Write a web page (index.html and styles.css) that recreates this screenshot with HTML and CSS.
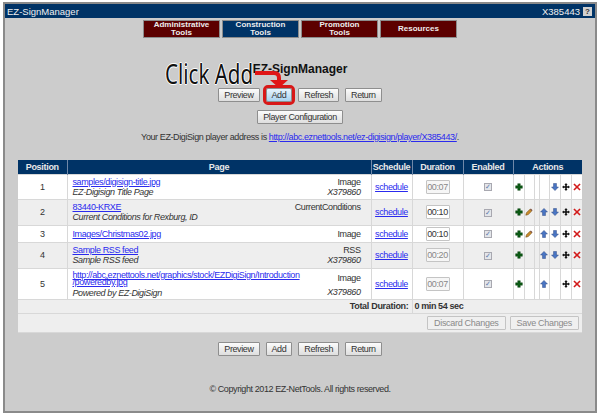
FILE: index.html
```html
<!DOCTYPE html>
<html lang="en">
<head>
    <meta charset="UTF-8">
    <title>EZ-SignManager</title>
    <link rel="stylesheet" href="styles.css">
</head>
<body>
    <svg class="icon-defs" width="0" height="0">
        <defs>
            <symbol id="i-add" viewBox="0 0 10 10">
                <path d="M3.400 .8h3.200v2.600h2.600v3.200H6.600v2.600H3.400V6.600H.8V3.400h2.600z" fill="#0b5a14" stroke="#063a0b" stroke-width=".5"/>
            </symbol>
            <symbol id="i-edit" viewBox="0 0 10 10">
                <path d="M1 9l.8-3 4.500-4.500 2.200 2.200L4 8.200z" fill="#c98a2a" stroke="#6b4a12" stroke-width=".7"/>
                <path d="M6.300 1.500l1-1 2.200 2.200-1 1z" fill="#7a4a3a"/>
            </symbol>
            <symbol id="i-up" viewBox="0 0 10 10">
                <path d="M5 .5l4.300 4.500H6.800v4.500H3.200V5H.7z" fill="#4a76c4" stroke="#24407c" stroke-width=".6"/>
            </symbol>
            <symbol id="i-down" viewBox="0 0 10 10">
                <path d="M5 9.500L.7 5h2.500V.5h3.600V5h2.500z" fill="#4a76c4" stroke="#24407c" stroke-width=".6"/>
            </symbol>
            <symbol id="i-move" viewBox="0 0 10 10">
                <path d="M5 0l2 2.400H6V4h1.600V3l2.400 2-2.400 2V6H6v1.600h1L5 10 3 7.600h1V6H2.400v1L0 5l2.400-2v1H4V2.400H3z" fill="#111"/>
            </symbol>
            <symbol id="i-del" viewBox="0 0 10 10">
                <path d="M1.200 1.200l7.600 7.600M8.800 1.200L1.200 8.800" stroke="#d21a1a" stroke-width="2" fill="none"/>
            </symbol>
        </defs>
    </svg>

    <div class="window">
        <header class="titlebar">
            <span class="app-name">EZ-SignManager</span>
            <span class="account">X385443</span>
            <span class="help-btn">?</span>
        </header>

        <nav class="tabs">
            <a href="#" class="tab">Administrative<br>Tools</a>
            <a href="#" class="tab tab-active">Construction<br>Tools</a>
            <a href="#" class="tab">Promotion<br>Tools</a>
            <a href="#" class="tab">Resources</a>
        </nav>

        <main class="main-content">
            <h1>EZ-SignManager</h1>

            <div class="callout">
                <span class="callout-text">Click Add</span>
                <svg class="callout-arrow" width="34" height="20" viewBox="0 0 34 20">
                    <path d="M0 3h19q5 0 5 5v4" fill="none" stroke="#e01616" stroke-width="4"/>
                    <path d="M15 10h18l-9 8z" fill="#e01616"/>
                </svg>
            </div>

            <div class="btn-row">
                <button type="button">Preview</button>
                <button type="button" class="btn-hot">Add</button>
                <button type="button">Refresh</button>
                <button type="button">Return</button>
            </div>
            <div class="btn-row btn-row-config">
                <button type="button">Player Configuration</button>
            </div>

            <p class="address">Your EZ-DigiSign player address is <a href="#">http://abc.eznettools.net/ez-digisign/player/X385443/</a>.</p>

            <table class="pages">
                <colgroup>
                    <col class="c-pos"><col class="c-page"><col class="c-sched"><col class="c-dur"><col class="c-en">
                    <col class="c-a1"><col class="c-a2"><col class="c-a3"><col class="c-a4"><col class="c-a5"><col class="c-a6"><col class="c-a7">
                </colgroup>
                <thead>
                    <tr>
                        <th>Position</th><th>Page</th><th>Schedule</th><th>Duration</th><th>Enabled</th>
                        <th colspan="7">Actions</th>
                    </tr>
                </thead>
                <tbody>
                    <tr class="row-1">
                        <td class="pos">1</td>
                        <td class="page-cell">
                            <div class="page-info">
                                <div><a href="#">samples/digisign-title.jpg</a><em>EZ-Digisign Title Page</em></div>
                                <div class="page-type">Image<em>X379860</em></div>
                            </div>
                        </td>
                        <td class="center"><a href="#" class="sched">schedule</a></td>
                        <td class="center"><input class="dur" value="00:07" disabled></td>
                        <td class="center"><input type="checkbox" class="chk" checked disabled></td>
                        <td class="act"><svg class="ico"><use href="#i-add"/></svg></td>
                        <td class="act"></td><td class="act"></td><td class="act"></td>
                        <td class="act"><svg class="ico"><use href="#i-down"/></svg></td>
                        <td class="act"><svg class="ico"><use href="#i-move"/></svg></td>
                        <td class="act"><svg class="ico"><use href="#i-del"/></svg></td>
                    </tr>
                    <tr class="alt row-2">
                        <td class="pos">2</td>
                        <td class="page-cell">
                            <div class="page-info">
                                <div><a href="#">83440-KRXE</a><em>Current Conditions for Rexburg, ID</em></div>
                                <div class="page-type page-type-top">CurrentConditions</div>
                            </div>
                        </td>
                        <td class="center"><a href="#" class="sched">schedule</a></td>
                        <td class="center"><input class="dur" value="00:10"></td>
                        <td class="center"><input type="checkbox" class="chk" checked disabled></td>
                        <td class="act"><svg class="ico"><use href="#i-add"/></svg></td>
                        <td class="act"><svg class="ico"><use href="#i-edit"/></svg></td>
                        <td class="act"></td>
                        <td class="act"><svg class="ico"><use href="#i-up"/></svg></td>
                        <td class="act"><svg class="ico"><use href="#i-down"/></svg></td>
                        <td class="act"><svg class="ico"><use href="#i-move"/></svg></td>
                        <td class="act"><svg class="ico"><use href="#i-del"/></svg></td>
                    </tr>
                    <tr class="row-3">
                        <td class="pos">3</td>
                        <td class="page-cell">
                            <div class="page-info">
                                <div><a href="#">Images/Christmas02.jpg</a></div>
                                <div class="page-type">Image</div>
                            </div>
                        </td>
                        <td class="center"><a href="#" class="sched">schedule</a></td>
                        <td class="center"><input class="dur" value="00:10"></td>
                        <td class="center"><input type="checkbox" class="chk" checked disabled></td>
                        <td class="act"><svg class="ico"><use href="#i-add"/></svg></td>
                        <td class="act"><svg class="ico"><use href="#i-edit"/></svg></td>
                        <td class="act"></td>
                        <td class="act"><svg class="ico"><use href="#i-up"/></svg></td>
                        <td class="act"><svg class="ico"><use href="#i-down"/></svg></td>
                        <td class="act"><svg class="ico"><use href="#i-move"/></svg></td>
                        <td class="act"><svg class="ico"><use href="#i-del"/></svg></td>
                    </tr>
                    <tr class="alt row-4">
                        <td class="pos">4</td>
                        <td class="page-cell">
                            <div class="page-info">
                                <div><a href="#">Sample RSS feed</a><em>Sample RSS feed</em></div>
                                <div class="page-type">RSS<em>X379860</em></div>
                            </div>
                        </td>
                        <td class="center"><a href="#" class="sched">schedule</a></td>
                        <td class="center"><input class="dur" value="00:20" disabled></td>
                        <td class="center"><input type="checkbox" class="chk" checked disabled></td>
                        <td class="act"><svg class="ico"><use href="#i-add"/></svg></td>
                        <td class="act"></td><td class="act"></td>
                        <td class="act"><svg class="ico"><use href="#i-up"/></svg></td>
                        <td class="act"><svg class="ico"><use href="#i-down"/></svg></td>
                        <td class="act"><svg class="ico"><use href="#i-move"/></svg></td>
                        <td class="act"><svg class="ico"><use href="#i-del"/></svg></td>
                    </tr>
                    <tr class="row-5">
                        <td class="pos">5</td>
                        <td class="page-cell">
                            <div class="page-info">
                                <div class="page-long"><a href="#">http://abc.eznettools.net/graphics/stock/EZDigiSign/Introduction<wbr>/poweredby.jpg</a><em>Powered by EZ-DigiSign</em></div>
                                <div class="page-type">Image<em class="gap-top">X379860</em></div>
                            </div>
                        </td>
                        <td class="center"><a href="#" class="sched">schedule</a></td>
                        <td class="center"><input class="dur" value="00:07" disabled></td>
                        <td class="center"><input type="checkbox" class="chk" checked disabled></td>
                        <td class="act"><svg class="ico"><use href="#i-add"/></svg></td>
                        <td class="act"></td><td class="act"></td>
                        <td class="act"><svg class="ico"><use href="#i-up"/></svg></td>
                        <td class="act"></td>
                        <td class="act"><svg class="ico"><use href="#i-move"/></svg></td>
                        <td class="act"><svg class="ico"><use href="#i-del"/></svg></td>
                    </tr>
                </tbody>
                <tfoot>
                    <tr class="alt total-row">
                        <td colspan="3" class="total-label">Total Duration:</td>
                        <td colspan="9" class="total-value">0 min 54 sec</td>
                    </tr>
                    <tr class="alt save-row">
                        <td colspan="12">
                            <div class="save-btns">
                                <button type="button" disabled>Discard Changes</button>
                                <button type="button" disabled>Save Changes</button>
                            </div>
                        </td>
                    </tr>
                </tfoot>
            </table>

            <div class="btn-row btn-row-bottom">
                <button type="button">Preview</button>
                <button type="button">Add</button>
                <button type="button">Refresh</button>
                <button type="button">Return</button>
            </div>

            <p class="copyright">© Copyright 2012 EZ-NetTools. All rights reserved.</p>
        </main>
    </div>
</body>
</html>
```
FILE: styles.css
```css
:root {
    --navy: #003366;
    --maroon: #5c0000;
    --panel: #cccccc;
    --row-alt: #eeeeee;
    --line: #d8d8d8;
    --link: #2a2aee;
    --text: #333333;
}

* {
    margin: 0;
    padding: 0;
    box-sizing: border-box;
}

html, body {
    height: 415px;
    overflow: hidden;
}

body {
    font-family: "Liberation Sans", Arial, sans-serif;
    font-size: 9px;
    letter-spacing: -.4px;
    color: var(--text);
    background: #ffffff;
    padding: 2px 3px;
}

.icon-defs {
    position: absolute;
}

.window {
    height: 411px;
    background: var(--panel);
    border: 2px solid #8a8a8a;
}

.titlebar {
    height: 14px;
    background: var(--navy);
    color: #f0f0f0;
    display: flex;
    align-items: center;
    padding: 0 3px 0 2px;
    font-size: 9.500px;
    letter-spacing: 0;
}

.app-name {
    flex: 1;
}

.account {
    margin-right: 3px;
}

.help-btn {
    width: 9px;
    height: 9px;
    background: #d0d0d0;
    color: #333333;
    font-size: 8px;
    font-weight: bold;
    line-height: 9px;
    text-align: center;
}

.tabs {
    display: flex;
    justify-content: center;
    gap: 2px;
    padding: 2px 0 0;
}

.tab {
    width: 77px;
    height: 18px;
    background: var(--maroon);
    border: 1px solid #8c8c8c;
    color: #eeeeee;
    font-size: 8px;
    font-weight: bold;
    letter-spacing: 0;
    line-height: 8px;
    text-align: center;
    text-decoration: none;
    display: flex;
    align-items: center;
    justify-content: center;
}

.tab-active {
    background: var(--navy);
}

.main-content {
    position: relative;
    padding: 24px 13px 0;
}

h1 {
    font-size: 12px;
    letter-spacing: 0;
    line-height: 14px;
    color: #111111;
    text-align: center;
}

.callout {
    position: absolute;
    left: 0;
    top: 0;
}

.callout-text {
    position: absolute;
    left: 160px;
    top: 22px;
    font-family: "Noto Sans", sans-serif;
    font-size: 27px;
    letter-spacing: 0;
    line-height: 28px;
    white-space: nowrap;
    color: #111111;
    transform: scaleX(.76);
    transform-origin: left center;
    text-shadow: -1px 0 #fff, 1px 0 #fff, 0 -1px #fff, 0 1px #fff;
}

.callout-arrow {
    position: absolute;
    left: 250px;
    top: 32px;
}

.btn-row {
    display: flex;
    justify-content: center;
    gap: 6px;
    margin-top: 12px;
}

.btn-row-config {
    margin-top: 8px;
}

.btn-row-bottom {
    margin-top: 9px;
}

button {
    height: 14px;
    padding: 0 5px;
    font-family: "Liberation Sans", Arial, sans-serif;
    font-size: 9px;
    letter-spacing: -.4px;
    color: #333333;
    background: linear-gradient(#fbfbfb, #dedede);
    border: 1px solid #8e8e8e;
    border-radius: 1px;
}

button:disabled {
    color: #8a8a8a;
    background: #f0f0f0;
    border-color: #c4c4c4;
}

.btn-hot {
    background: linear-gradient(#e8f4fc, #a9d3f0);
    outline: 3px solid #d81818;
    border-radius: 2px;
}

.address {
    text-align: center;
    margin-top: 8px;
    line-height: 11px;
}

a {
    color: var(--link);
}

.pages {
    width: 564px;
    table-layout: fixed;
    border-collapse: collapse;
    margin-top: 17px;
}

.c-pos { width: 49px; }
.c-page { width: 304px; }
.c-sched { width: 41px; }
.c-dur { width: 51px; }
.c-en { width: 50px; }
.c-a1 { width: 11px; }
.c-a2 { width: 10px; }
.c-a3 { width: 5px; }
.c-a4 { width: 10px; }
.c-a5 { width: 11px; }
.c-a6 { width: 11px; }
.c-a7 { width: 11px; }

th {
    height: 14px;
    background: var(--navy);
    color: #e8e8e8;
    font-size: 9px;
    letter-spacing: -.3px;
    border-left: 1px solid #7088a8;
}

th:first-child {
    border-left: 0;
}

tbody tr {
    background: #ffffff;
}

tbody tr.alt, tfoot tr {
    background: var(--row-alt);
}

td {
    border: 1px solid var(--line);
    border-width: 1px 0 1px 1px;
    vertical-align: middle;
}

td:first-child {
    border-left: 0;
}

.row-1 { height: 25px; }
.row-2 { height: 26px; }
.row-3 { height: 17px; }
.row-4 { height: 26px; }
.row-5 { height: 31px; }
.total-row { height: 14px; }
.save-row { height: 19px; }

.pos, .center {
    text-align: center;
}

.page-cell {
    padding: 1px 10px 0 5px;
}

.row-5 .page-cell {
    padding-top: 3px;
}

.page-info {
    display: flex;
    justify-content: space-between;
    line-height: 9px;
}

.page-info em {
    display: block;
    margin-top: 1px;
}

.page-long {
    width: 230px;
    line-height: 7px;
}

.page-long em {
    line-height: 10px;
    margin-top: 2px;
}

.page-type {
    text-align: right;
}

.row-5 .page-type {
    margin-top: 2px;
}

.page-type-top {
    align-self: flex-start;
}

.page-info .gap-top {
    margin-top: 5px;
}

.dur {
    width: 24px;
    height: 14px;
    border: 1px solid #c4c4c4;
    border-radius: 1px;
    background: #ffffff;
    font-family: "Liberation Sans", Arial, sans-serif;
    font-size: 9px;
    letter-spacing: -.4px;
    color: #333333;
    text-align: center;
    vertical-align: middle;
}

.dur:disabled {
    color: #888888;
    background: #f6f6f6;
}

.chk {
    appearance: none;
    display: inline-block;
    width: 8px;
    height: 8px;
    border: 1px solid #a8a8b0;
    background: #e4e6ea;
    color: #5a78a8;
    font-family: "DejaVu Sans", sans-serif;
    font-size: 7px;
    line-height: 6px;
    text-align: center;
    vertical-align: middle;
    overflow: hidden;
}

.chk:checked::before {
    content: "✓";
}

.act {
    text-align: center;
    padding: 0;
    font-size: 0;
}

.ico {
    width: 8px;
    height: 8px;
    vertical-align: middle;
}

.total-label {
    text-align: right;
    padding-right: 3px;
    font-weight: bold;
    letter-spacing: -.3px;
}

.total-value {
    padding-left: 2px;
    font-weight: bold;
}

.save-btns {
    display: flex;
    justify-content: flex-end;
    gap: 4px;
    padding-right: 3px;
}

.save-btns button {
    padding: 0 6px;
    letter-spacing: -.3px;
}

.copyright {
    text-align: center;
    margin-top: 28px;
}
```
